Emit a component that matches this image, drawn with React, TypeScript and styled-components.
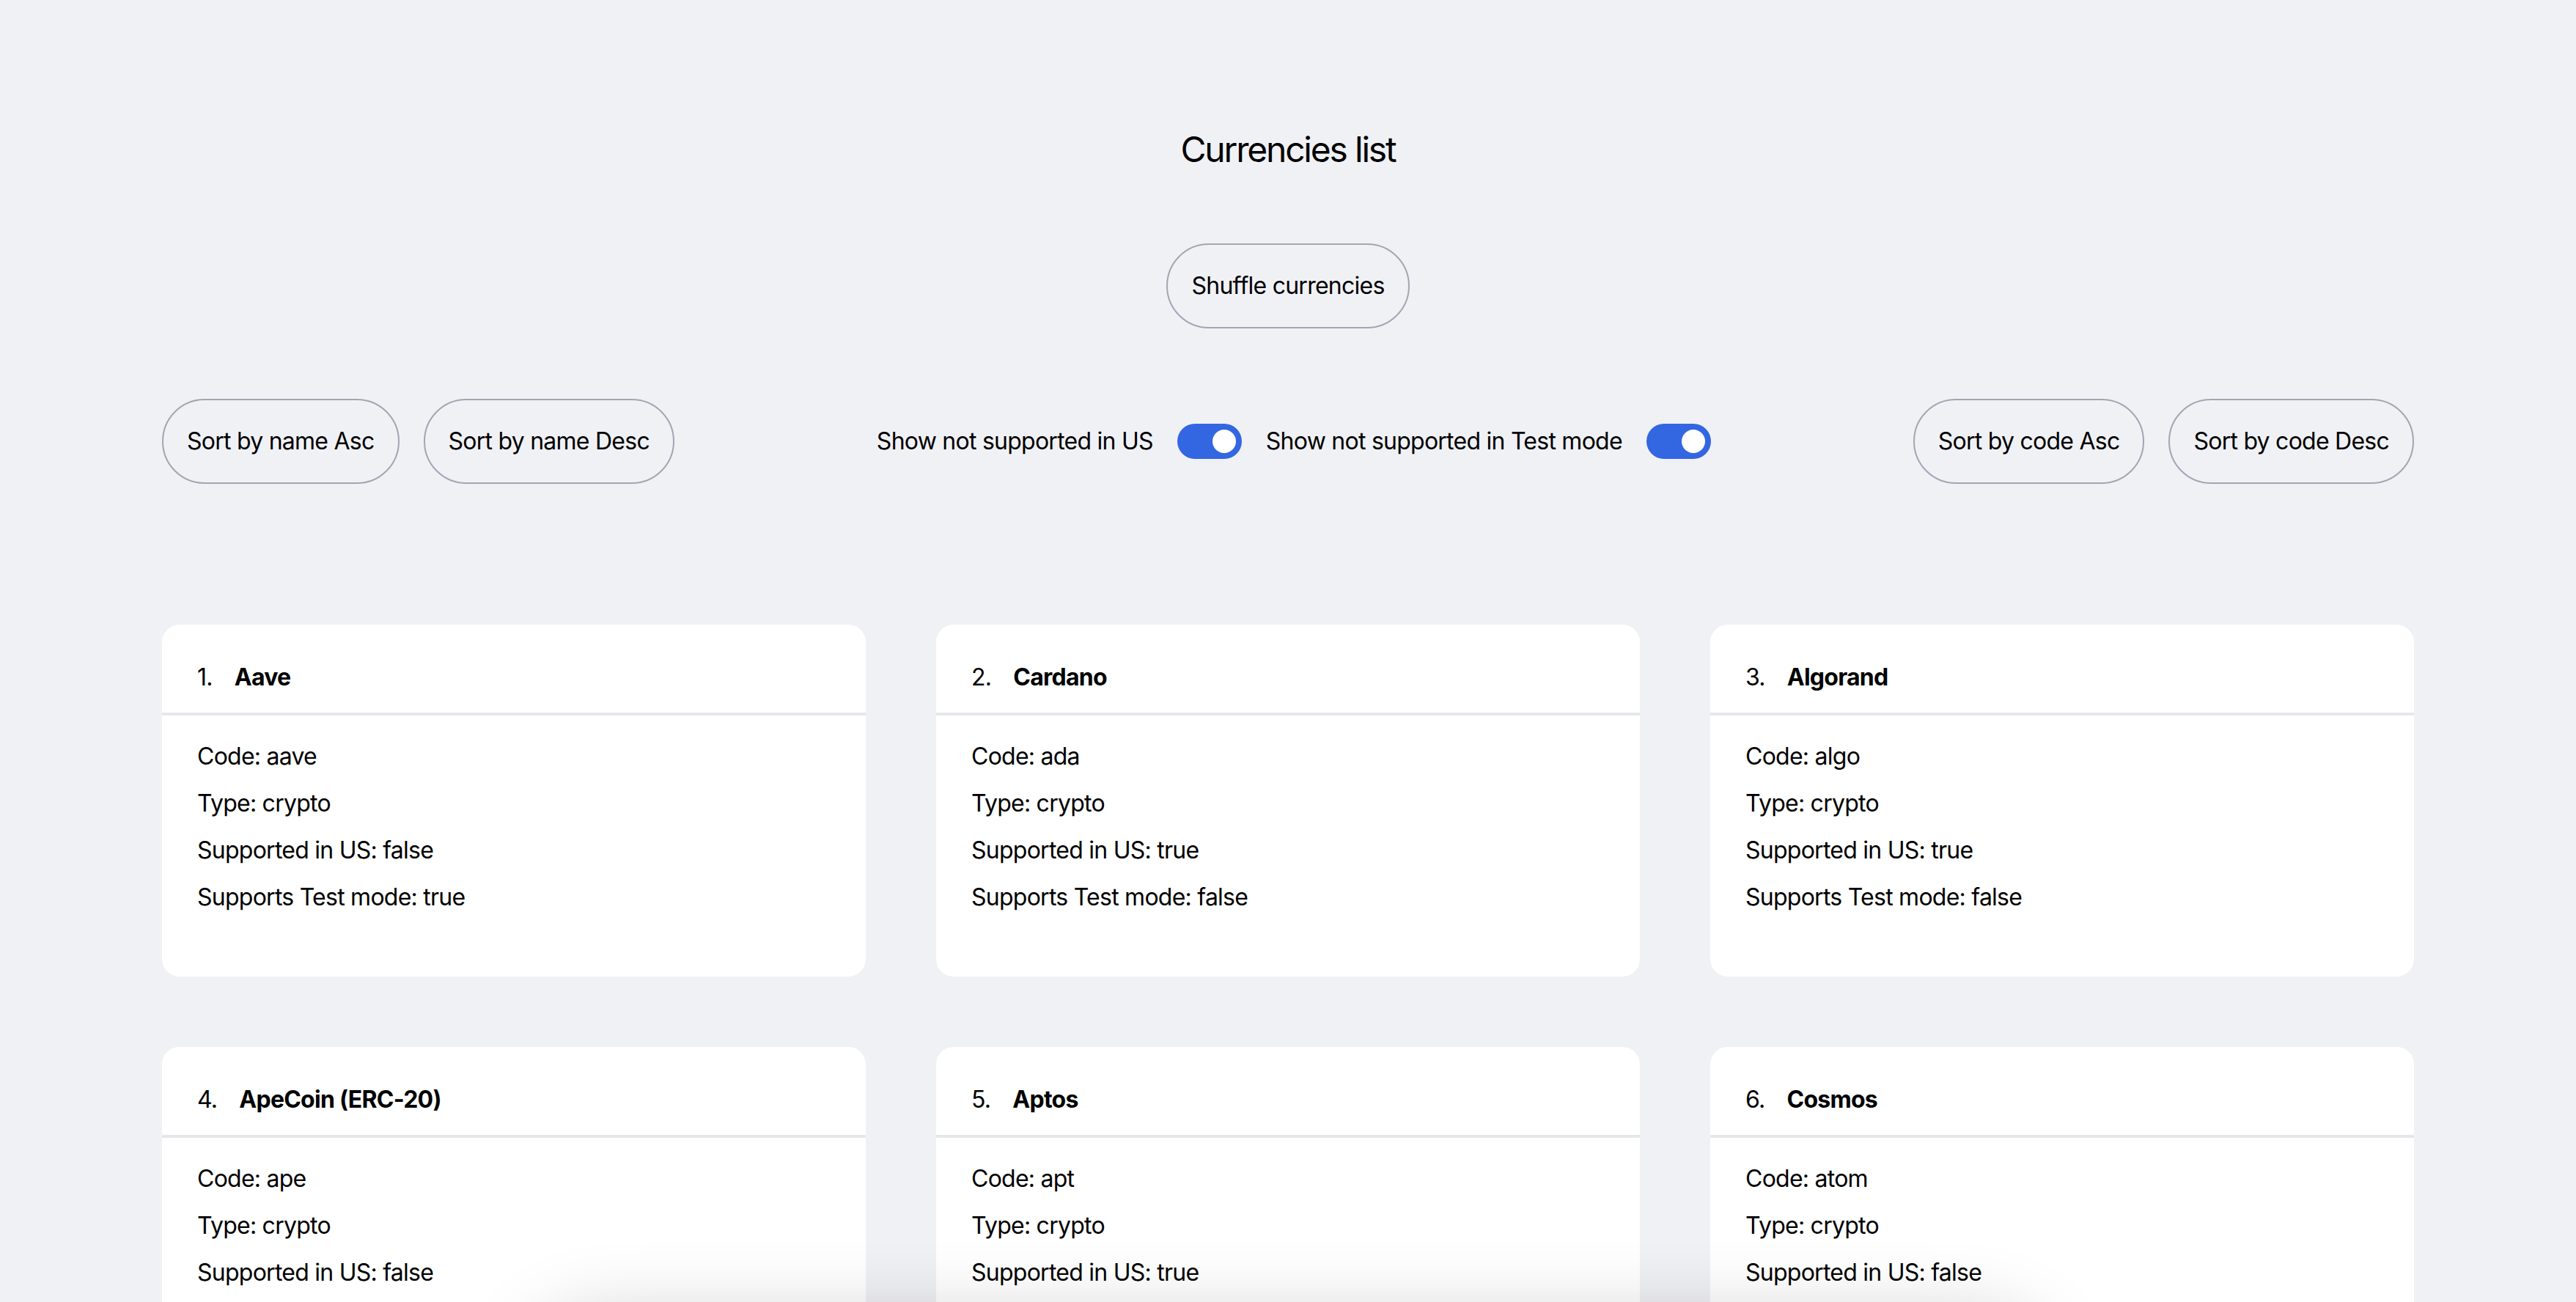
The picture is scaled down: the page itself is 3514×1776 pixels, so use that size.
import React from "react";
import styled, { createGlobalStyle } from "styled-components";

const GlobalStyle = createGlobalStyle`
  html, body {
    margin: 0;
    padding: 0;
    background: #f0f1f5;
    font-family: Inter, "Noto Sans", "Liberation Sans", sans-serif;
    color: #000;
  }
  * { box-sizing: border-box; }
`;

const Page = styled.main`
  max-width: 3072px;
  margin: 0 auto;
  padding: 168px 0 96px;
  display: flex;
  flex-direction: column;
  align-items: center;
  letter-spacing: -0.75px;
`;

const Title = styled.h1`
  margin: 0;
  font-size: 48px;
  line-height: 72px;
  font-weight: 400;
  letter-spacing: -2.2px;
  text-align: center;
`;

const PillButton = styled.button`
  height: 116px;
  padding: 0 32px;
  border: 2px solid #a1a6b2;
  border-radius: 999px;
  background: transparent;
  font-family: inherit;
  font-size: 32px;
  line-height: 48px;
  letter-spacing: inherit;
  color: #000;
  white-space: nowrap;
  cursor: pointer;
`;

const ShuffleButton = styled(PillButton)`
  margin-top: 92px;
`;

const Toolbar = styled.div`
  width: 100%;
  margin-top: 96px;
  display: flex;
  align-items: center;
  justify-content: space-between;
`;

const Group = styled.div`
  display: flex;
  align-items: center;
  gap: 33px;
`;

const ToggleLabel = styled.span`
  font-size: 32px;
  line-height: 48px;
  white-space: nowrap;
`;

const Toggle = styled.span<{ $on: boolean }>`
  width: 88px;
  height: 48px;
  border-radius: 24px;
  background: ${(p) => (p.$on ? "#3366e1" : "#c5c9d2")};
  display: flex;
  align-items: center;
  justify-content: ${(p) => (p.$on ? "flex-end" : "flex-start")};
  padding: 0 8px;
  flex-shrink: 0;
`;

const Knob = styled.span`
  width: 32px;
  height: 32px;
  border-radius: 50%;
  background: #fff;
`;

const Grid = styled.div`
  width: 100%;
  margin-top: 192px;
  display: grid;
  grid-template-columns: repeat(3, 1fr);
  gap: 96px;
`;

const Card = styled.article`
  background: #fff;
  border-radius: 24px;
  overflow: hidden;
`;

const CardHeader = styled.header`
  padding: 48px 48px 24px;
  border-bottom: 4px solid #e6e7eb;
  font-size: 32px;
  line-height: 48px;
  display: flex;
`;

const Index = styled.span`
  margin-right: 30px;
`;

const Name = styled.span`
  font-weight: 700;
`;

const CardBody = styled.div`
  padding: 32px 48px 84px;
  display: flex;
  flex-direction: column;
  gap: 16px;
`;

const Row = styled.div`
  font-size: 32px;
  line-height: 48px;
`;

const BottomShade = styled.div`
  position: fixed;
  left: 50%;
  top: calc(100% + 60px);
  width: 2000px;
  height: 120px;
  transform: translateX(-50%);
  border-radius: 60px;
  background: #fff;
  box-shadow: 0 0 110px 36px rgba(0, 0, 0, 0.2);
  pointer-events: none;
`;

type Currency = {
  name: string;
  code: string;
  type: string;
  us: boolean;
  test: boolean;
};

const currencies: Currency[] = [
  { name: "Aave", code: "aave", type: "crypto", us: false, test: true },
  { name: "Cardano", code: "ada", type: "crypto", us: true, test: false },
  { name: "Algorand", code: "algo", type: "crypto", us: true, test: false },
  { name: "ApeCoin (ERC-20)", code: "ape", type: "crypto", us: false, test: false },
  { name: "Aptos", code: "apt", type: "crypto", us: true, test: false },
  { name: "Cosmos", code: "atom", type: "crypto", us: false, test: false },
];

export default function App() {
  return (
    <>
      <GlobalStyle />
      <Page>
        <Title>Currencies list</Title>
        <ShuffleButton>Shuffle currencies</ShuffleButton>
        <Toolbar>
          <Group>
            <PillButton>Sort by name Asc</PillButton>
            <PillButton>Sort by name Desc</PillButton>
          </Group>
          <Group>
            <ToggleLabel>Show not supported in US</ToggleLabel>
            <Toggle $on>
              <Knob />
            </Toggle>
            <ToggleLabel>Show not supported in Test mode</ToggleLabel>
            <Toggle $on>
              <Knob />
            </Toggle>
          </Group>
          <Group>
            <PillButton>Sort by code Asc</PillButton>
            <PillButton>Sort by code Desc</PillButton>
          </Group>
        </Toolbar>
        <Grid>
          {currencies.map((c, i) => (
            <Card key={c.code}>
              <CardHeader>
                <Index>{i + 1}.</Index>
                <Name>{c.name}</Name>
              </CardHeader>
              <CardBody>
                <Row>Code: {c.code}</Row>
                <Row>Type: {c.type}</Row>
                <Row>Supported in US: {String(c.us)}</Row>
                <Row>Supports Test mode: {String(c.test)}</Row>
              </CardBody>
            </Card>
          ))}
        </Grid>
      </Page>
      <BottomShade />
    </>
  );
}
